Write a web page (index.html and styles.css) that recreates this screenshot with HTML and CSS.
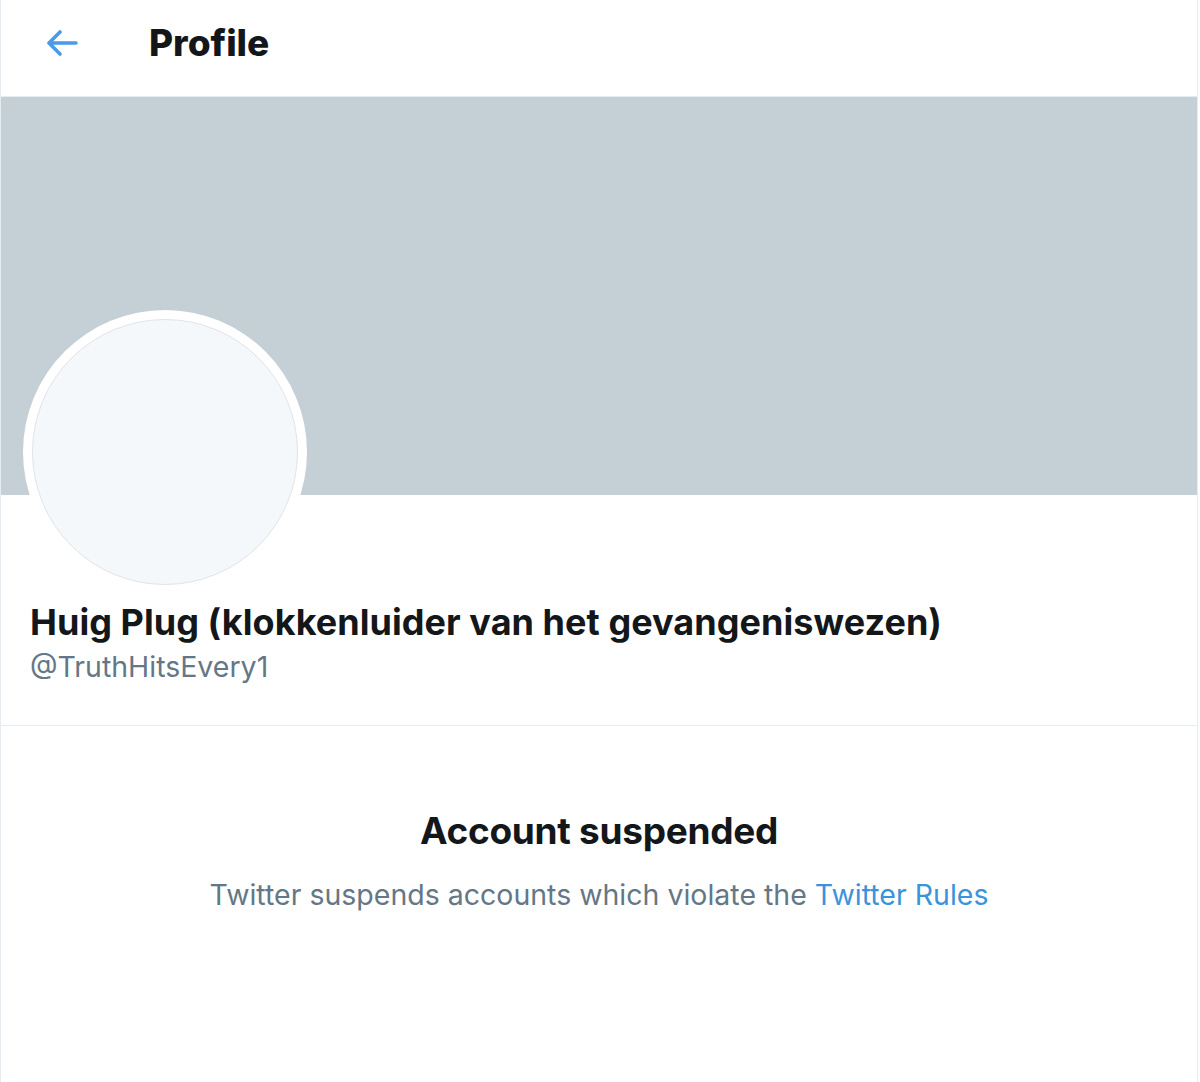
FILE: index.html
```html
<!DOCTYPE html>
<html lang="en">
<head>
<meta charset="utf-8">
<title>Profile</title>
<link rel="stylesheet" href="styles.css">
</head>
<body>
<div class="page">
  <header class="topbar">
    <a class="back" href="#" aria-label="Back">
      <svg viewBox="0 0 32 26" width="32" height="26" aria-hidden="true">
        <path d="M30 13H3M14 2L3 13l11 11" fill="none" stroke="currentColor" stroke-width="3.6" stroke-linecap="round" stroke-linejoin="round"/>
      </svg>
    </a>
    <h1 class="title">Profile</h1>
  </header>
  <div class="banner"></div>
  <section class="profile">
    <div class="avatar"><div class="avatar-inner"></div></div>
    <div class="name">Huig Plug (klokkenluider van het gevangeniswezen)</div>
    <div class="handle">@TruthHitsEvery1</div>
  </section>
  <section class="suspended">
    <h2 class="suspended-title">Account suspended</h2>
    <p class="suspended-text">Twitter suspends accounts which violate the <a class="link" href="#">Twitter Rules</a></p>
  </section>
</div>
</body>
</html>
```

FILE: styles.css
```css
* { box-sizing: border-box; }
html, body { margin: 0; padding: 0; background: #fff; }
body {
  font-family: Inter, "Noto Sans", "Liberation Sans", sans-serif;
  color: #14171a;
}
.page {
  width: 1198px;
  min-height: 1082px;
  border-left: 1px solid #e6ecf0;
  border-right: 1px solid #e6ecf0;
  background: #fff;
}
.topbar {
  height: 97px;
  border-bottom: 1px solid #e6ecf0;
  display: flex;
  align-items: center;
  padding-left: 45px;
}
.back {
  color: #4a9be6;
  display: flex;
  width: 32px;
  height: 26px;
  margin-top: -10px;
}
.title {
  margin: -12px 0 0 71px;
  font-size: 37px;
  font-weight: 800;
  letter-spacing: 0;
}
.banner {
  height: 398px;
  background: #c4cfd6;
}
.profile {
  display: flex;
  flex-direction: column;
  align-items: flex-start;
  padding: 0 28px 0 29px;
  height: 231px;
  border-bottom: 1px solid #e6ecf0;
}
.avatar {
  flex: none;
  width: 284px;
  height: 284px;
  margin: -185px 0 0 -7px;
  border-radius: 50%;
  background: #fff;
  padding: 9px;
}
.avatar-inner {
  width: 100%;
  height: 100%;
  border-radius: 50%;
  background: #f5f8fa;
  border: 1px solid #e1e4e8;
}
.name {
  margin-top: 6px;
  font-size: 36px;
  font-weight: 700;
  line-height: 44px;
  letter-spacing: 0.05px;
}
.handle {
  margin-top: 6px;
  font-size: 28.5px;
  line-height: 34px;
  color: #657786;
}
.suspended {
  text-align: center;
  padding-top: 83px;
}
.suspended-title {
  margin: 0;
  font-size: 37px;
  font-weight: 700;
  line-height: 44px;
  letter-spacing: -0.3px;
}
.suspended-text {
  margin: 24px 0 0;
  font-size: 28.5px;
  line-height: 36px;
  color: #657786;
}
.link {
  color: #3b94d9;
  text-decoration: none;
}
```
